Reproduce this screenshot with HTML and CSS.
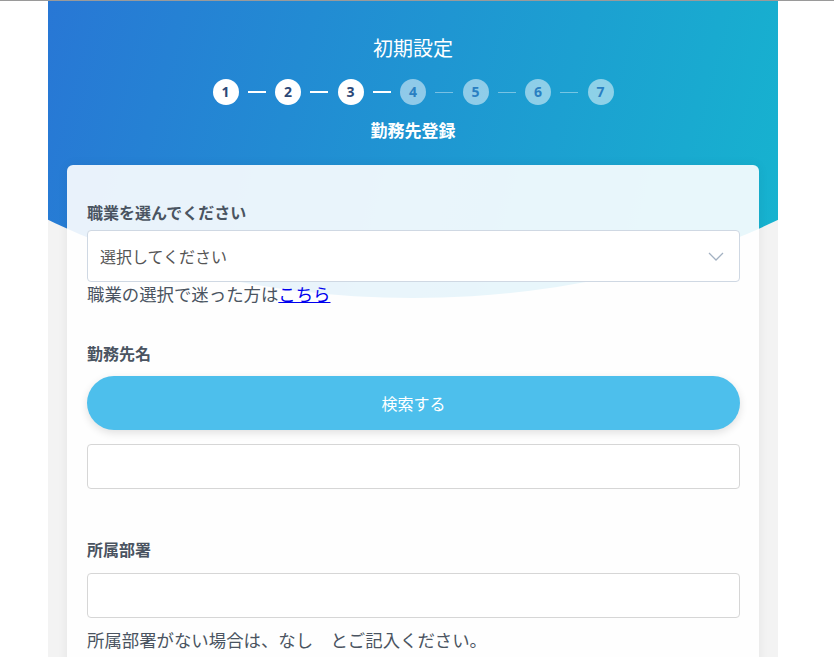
FILE: index.html
```html
<!DOCTYPE html>
<html lang="ja">
<head>
    <meta charset="UTF-8">
    <meta name="viewport" content="width=device-width, initial-scale=1.0">
    <title>初期設定</title>
    <link rel="stylesheet" href="styles.css">
</head>
<body>
    <div class="page">
        <header class="hero">
            <h1>初期設定</h1>

            <ol class="steps">
                <li class="step done">1</li>
                <li class="bar done"></li>
                <li class="step done">2</li>
                <li class="bar done"></li>
                <li class="step done">3</li>
                <li class="bar done"></li>
                <li class="step">4</li>
                <li class="bar"></li>
                <li class="step">5</li>
                <li class="bar"></li>
                <li class="step">6</li>
                <li class="bar"></li>
                <li class="step">7</li>
            </ol>

            <h2>勤務先登録</h2>
        </header>

        <div class="card">
            <label class="label">職業を選んでください</label>
            <div class="select">
                <span>選択してください</span>
                <svg width="16" height="9" viewBox="0 0 16 9">
                    <polyline points="1,1 8,8 15,1" fill="none" stroke="#a3b1c2" stroke-width="1.3"/>
                </svg>
            </div>
            <p class="help">職業の選択で迷った方は<a href="#">こちら</a></p>

            <label class="label label-gap">勤務先名</label>
            <button class="btn-search">検索する</button>
            <input class="input input-first" type="text">

            <label class="label label-gap-lg">所属部署</label>
            <input class="input" type="text">
            <p class="help help-bottom">所属部署がない場合は、なし　とご記入ください。</p>
        </div>
    </div>
</body>
</html>
```

FILE: styles.css
```css
* {
    margin: 0;
    padding: 0;
    box-sizing: border-box;
}

body {
    font-family: "Noto Sans CJK JP", "Noto Sans", sans-serif;
    background: #fff;
    border-top: 1px solid #9a9a9a;
    min-height: 100vh;
}

.page {
    width: 730px;
    margin-left: 48px;
    min-height: 700px;
    background: #f3f3f3;
}

.hero {
    height: 297px;
    padding-top: 33px;
    background: linear-gradient(105deg, #2877d5 0%, #16b4cf 100%);
    clip-path: ellipse(600px 379px at 50% -82px);
    color: #fff;
    text-align: center;
}

.hero h1 {
    font-size: 20px;
    font-weight: 400;
    line-height: 28px;
}

.steps {
    list-style: none;
    display: flex;
    align-items: center;
    justify-content: center;
    gap: 9.25px;
    margin-top: 17px;
}

.step {
    width: 26px;
    height: 26px;
    border-radius: 50%;
    background: rgba(255,255,255,0.5);
    color: #2a7fc2;
    font-family: "Open Sans", sans-serif;
    font-size: 14px;
    font-weight: 700;
    line-height: 26px;
}

.step.done {
    background: #fff;
    color: #2c4877;
}

.bar {
    width: 18px;
    height: 1px;
    background: rgba(255,255,255,0.4);
}

.bar.done {
    height: 1.5px;
    background: #fff;
}

.hero h2 {
    margin-top: 13px;
    font-size: 17px;
    font-weight: 700;
    line-height: 24px;
}

.card {
    margin: -133px 19px 0;
    padding: 35px 19px 30px 20px;
    background: rgba(255,255,255,0.9);
    border-radius: 6px;
    box-shadow: 0 0 12px rgba(0,0,0,0.06);
    position: relative;
}

.label {
    display: block;
    font-size: 16px;
    font-weight: 700;
    line-height: 24px;
    color: #4a5461;
}

.label-gap {
    margin-top: 35px;
}

.label-gap-lg {
    margin-top: 48px;
}

.select {
    display: flex;
    align-items: center;
    justify-content: space-between;
    height: 52px;
    margin-top: 6px;
    padding: 0 15px 0 12px;
    background: #fff;
    border: 1px solid #cfd8e3;
    border-radius: 4px;
    font-size: 16px;
    color: #555;
}

.help {
    font-size: 17.4px;
    line-height: 24px;
    color: #4a5461;
}

.help a {
    color: #0000ee;
}

.help-bottom {
    margin-top: 10px;
}

.btn-search {
    display: block;
    width: 100%;
    height: 54px;
    margin-top: 11px;
    border: none;
    border-radius: 27px;
    background: #4dbfec;
    color: #fff;
    font-family: inherit;
    font-size: 16px;
    box-shadow: 0 3px 8px rgba(0,0,0,0.12);
}

.input {
    display: block;
    width: 100%;
    height: 45px;
    margin-top: 12px;
    border: 1px solid #d6d6d6;
    border-radius: 4px;
    background: #fff;
}

.input-first {
    margin-top: 14px;
}
```
